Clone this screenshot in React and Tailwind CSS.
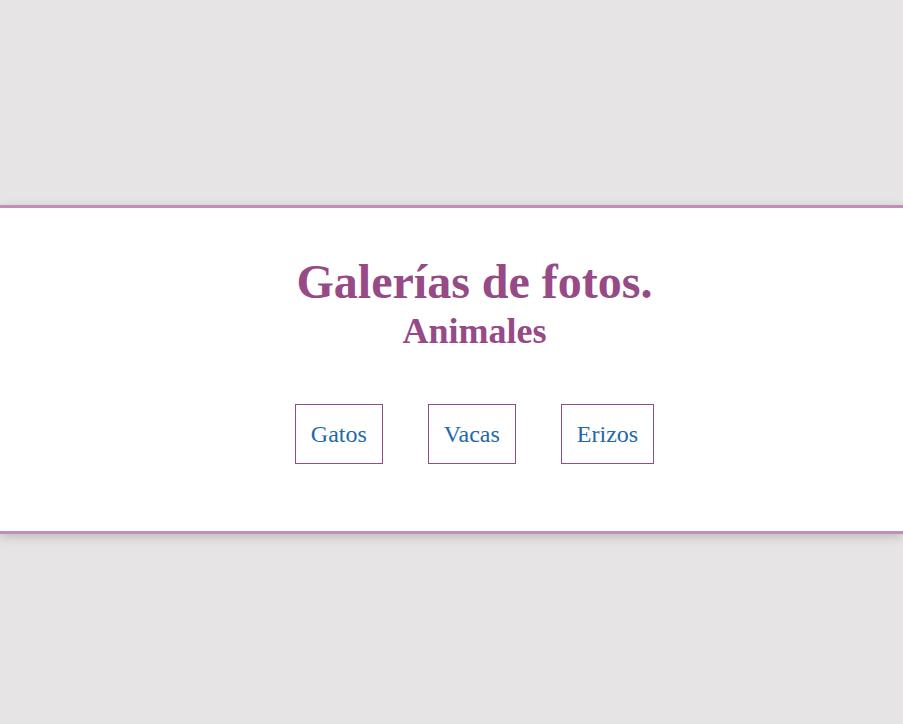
// Photo gallery landing
export default function App() {
  const galleries = ['Gatos', 'Vacas', 'Erizos'];

  return (
    <div className="min-h-screen bg-[#e6e4e5] pt-[205px] font-['Liberation_Serif',serif]">
      <section className="bg-white border-y-[3px] border-[#c08eb7] shadow-[0_3px_10px_rgba(0,0,0,0.18)] pt-[46px] pb-[67px] pl-[46px]">
        <h1 className="text-center text-[48px] font-bold leading-[55px] text-[#964a86]">
          Galerías de fotos.
        </h1>
        <h2 className="mt-[2px] text-center text-[36px] font-bold leading-[41px] text-[#964a86]">
          Animales
        </h2>

        <nav className="mt-[52px] flex justify-center gap-[45px]">
          {galleries.map((name) => (
            <a
              key={name}
              href="#"
              className="block border border-[#8e4f88] px-[15px] py-4 text-[24px] leading-[26px] text-[#1d69aa]"
            >
              {name}
            </a>
          ))}
        </nav>
      </section>
    </div>
  );
}
